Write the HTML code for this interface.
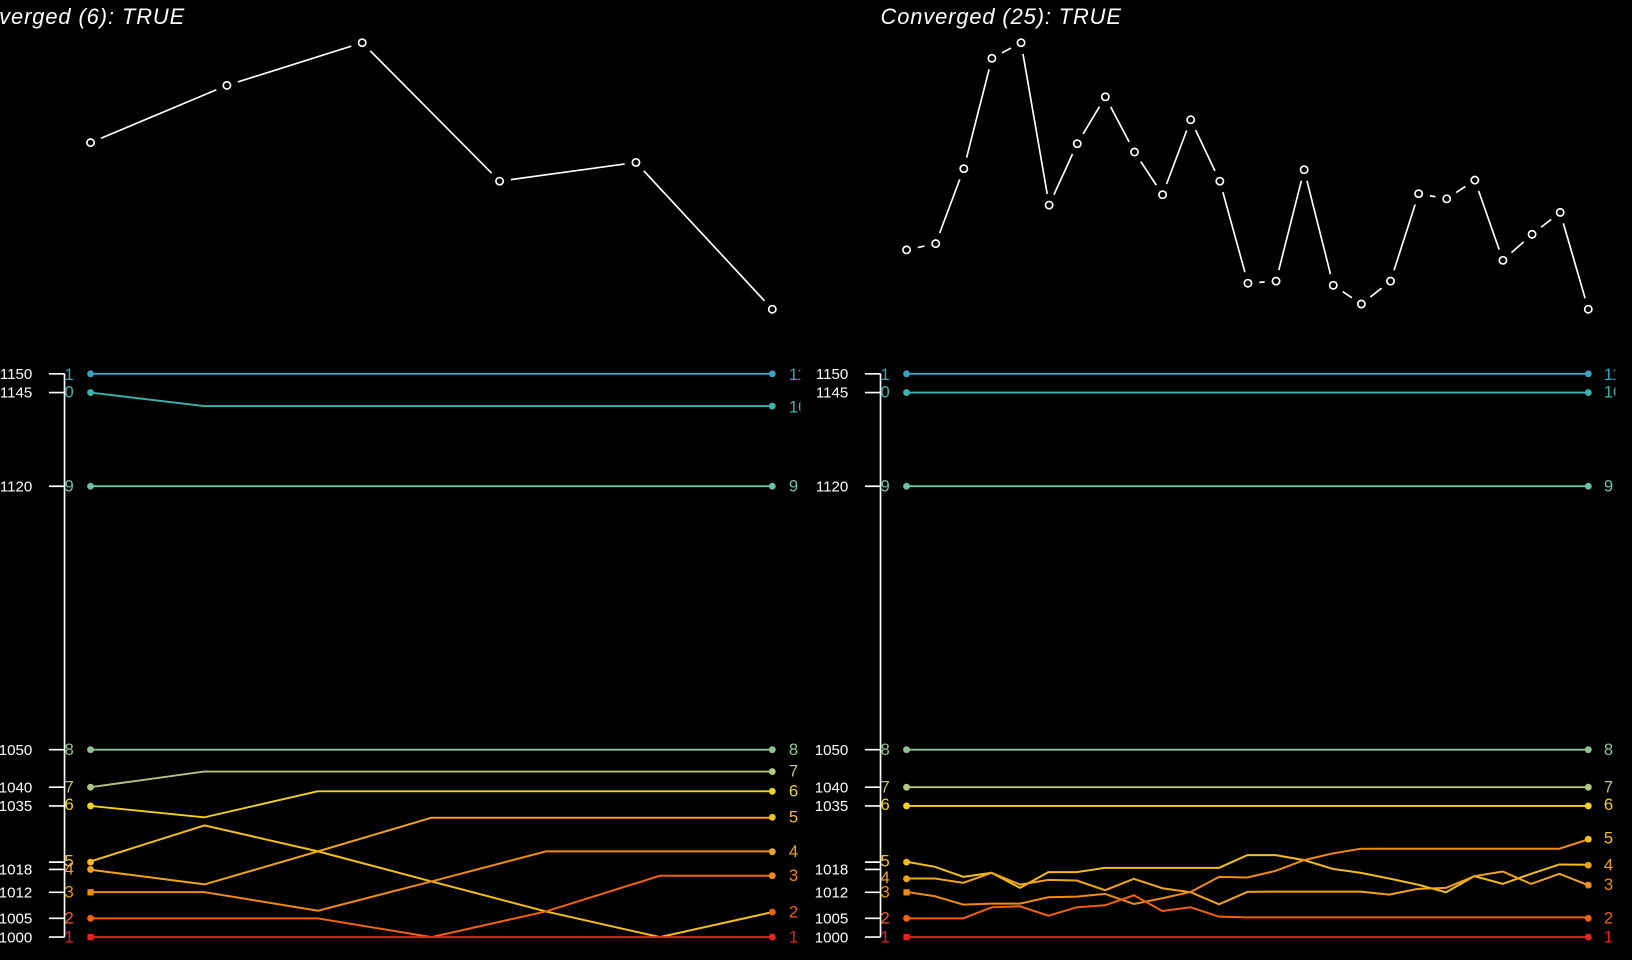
<!DOCTYPE html>
<html><head><meta charset="utf-8"><style>
html,body{margin:0;padding:0;background:#000;width:1632px;height:960px;overflow:hidden}
svg{display:block}
text{font-family:"Liberation Sans",sans-serif}
.t{fill:#fff;font-size:21px;font-style:italic}
.ax{fill:#fff;font-size:14.5px;text-anchor:end}
.lb{font-size:16px}
.w{stroke:#fff;stroke-width:1.6;fill:none}
.nl{fill:none;stroke-width:2;vector-effect:non-scaling-stroke}
</style></head><body>
<svg width="1632" height="960" viewBox="0 0 1568 922" preserveAspectRatio="none" xmlns="http://www.w3.org/2000/svg">
<rect width="1568" height="922" fill="#000"/>
<text class="t" x="177" y="23" text-anchor="end" textLength="219">Converged (6): TRUE</text>
<text class="t" x="846" y="23" textLength="231">Converged (25): TRUE</text>

<!-- top left -->
<polyline class="w" points="87,137 218,82 348,41 480,174 611,156 742,297"/>
<g fill="#000"><circle cx="87" cy="137" r="11"/><circle cx="218" cy="82" r="11"/><circle cx="348" cy="41" r="11"/><circle cx="480" cy="174" r="11"/><circle cx="611" cy="156" r="11"/><circle cx="742" cy="297" r="11"/></g>
<g fill="#000" stroke="#fff" stroke-width="1.6"><circle cx="87" cy="137" r="3.5"/><circle cx="218" cy="82" r="3.5"/><circle cx="348" cy="41" r="3.5"/><circle cx="480" cy="174" r="3.5"/><circle cx="611" cy="156" r="3.5"/><circle cx="742" cy="297" r="3.5"/></g>

<!-- top right -->
<polyline class="w" points="871,240 899,234 926,162 953,56 981,41 1008,197 1035,138 1062,93 1090,146 1117,187 1144,115 1172,174 1199,272 1226,270 1253,163 1281,274 1308,292 1336,270 1363,186 1390,191 1417,173 1444,250 1472,225 1499,204 1526,297"/>
<g fill="#000">
<circle cx="871" cy="240" r="11"/><circle cx="899" cy="234" r="11"/><circle cx="926" cy="162" r="11"/><circle cx="953" cy="56" r="11"/><circle cx="981" cy="41" r="11"/><circle cx="1008" cy="197" r="11"/><circle cx="1035" cy="138" r="11"/><circle cx="1062" cy="93" r="11"/><circle cx="1090" cy="146" r="11"/><circle cx="1117" cy="187" r="11"/><circle cx="1144" cy="115" r="11"/><circle cx="1172" cy="174" r="11"/><circle cx="1199" cy="272" r="11"/><circle cx="1226" cy="270" r="11"/><circle cx="1253" cy="163" r="11"/><circle cx="1281" cy="274" r="11"/><circle cx="1308" cy="292" r="11"/><circle cx="1336" cy="270" r="11"/><circle cx="1363" cy="186" r="11"/><circle cx="1390" cy="191" r="11"/><circle cx="1417" cy="173" r="11"/><circle cx="1444" cy="250" r="11"/><circle cx="1472" cy="225" r="11"/><circle cx="1499" cy="204" r="11"/><circle cx="1526" cy="297" r="11"/>
</g>
<g fill="#000" stroke="#fff" stroke-width="1.6">
<circle cx="871" cy="240" r="3.5"/><circle cx="899" cy="234" r="3.5"/><circle cx="926" cy="162" r="3.5"/><circle cx="953" cy="56" r="3.5"/><circle cx="981" cy="41" r="3.5"/><circle cx="1008" cy="197" r="3.5"/><circle cx="1035" cy="138" r="3.5"/><circle cx="1062" cy="93" r="3.5"/><circle cx="1090" cy="146" r="3.5"/><circle cx="1117" cy="187" r="3.5"/><circle cx="1144" cy="115" r="3.5"/><circle cx="1172" cy="174" r="3.5"/><circle cx="1199" cy="272" r="3.5"/><circle cx="1226" cy="270" r="3.5"/><circle cx="1253" cy="163" r="3.5"/><circle cx="1281" cy="274" r="3.5"/><circle cx="1308" cy="292" r="3.5"/><circle cx="1336" cy="270" r="3.5"/><circle cx="1363" cy="186" r="3.5"/><circle cx="1390" cy="191" r="3.5"/><circle cx="1417" cy="173" r="3.5"/><circle cx="1444" cy="250" r="3.5"/><circle cx="1472" cy="225" r="3.5"/><circle cx="1499" cy="204" r="3.5"/><circle cx="1526" cy="297" r="3.5"/>
</g>

<!-- axes -->
<g stroke="#fff" stroke-width="1.6" fill="none">
<path d="M62,359V900 M47,359H62 M47,377H62 M47,467H62 M47,720H62 M47,756H62 M47,774H62 M47,828H62 M47,835H62 M47,857H62 M47,882H62 M47,900H62"/>
<path d="M846,359V900 M831,359H846 M831,377H846 M831,467H846 M831,720H846 M831,756H846 M831,774H846 M831,828H846 M831,835H846 M831,857H846 M831,882H846 M831,900H846"/>
</g>
<g class="ax">
<text x="31" y="364">1150</text><text x="31" y="382">1145</text><text x="31" y="472">1120</text><text x="31" y="725">1050</text><text x="31" y="761">1040</text><text x="31" y="779">1035</text><text x="31" y="840">1018</text><text x="31" y="862">1012</text><text x="31" y="887">1005</text><text x="31" y="905">1000</text>
<text x="815" y="364">1150</text><text x="815" y="382">1145</text><text x="815" y="472">1120</text><text x="815" y="725">1050</text><text x="815" y="761">1040</text><text x="815" y="779">1035</text><text x="815" y="840">1018</text><text x="815" y="862">1012</text><text x="815" y="887">1005</text><text x="815" y="905">1000</text>
</g>

<!-- left bottom lines -->
<g stroke-width="1.8" fill="none">
<path stroke="#3aa0c4" d="M87,359H742"/>
<path stroke="#3db3ad" d="M87,377L196,390H742"/>
<path stroke="#6cc2a4" d="M87,467H742"/>
<path stroke="#8ec495" d="M87,720H742"/>
<path stroke="#b5c480" d="M87,756L196,741H742"/>
<path stroke="#f2d21e" d="M87,774L196,785L305,760H742"/>
</g>
<g transform="matrix(0.4659 0 0 0.3203 57.65 720)">
<polyline class="nl" stroke="#f3bd1e" points="63,335 298,227 532,305 766,395 1002,485 1237,562 1469,487"/>
<polyline class="nl" stroke="#f0a41c" points="63,360 298,404 532,305 766,204 1002,204 1237,204 1469,204"/>
<polyline class="nl" stroke="#ef8a12" points="63,427 298,427 532,483 766,395 1002,305 1237,305 1469,305"/>
<polyline class="nl" stroke="#f0620f" points="63,506 298,506 532,506 766,562 1002,485 1237,378 1469,378"/>
<polyline class="nl" stroke="#e8231e" points="63,562 1469,562"/>
</g>

<!-- right bottom lines -->
<g stroke-width="1.8" fill="none">
<path stroke="#3aa0c4" d="M871,359H1526"/>
<path stroke="#3db3ad" d="M871,377H1526"/>
<path stroke="#6cc2a4" d="M871,467H1526"/>
<path stroke="#8ec495" d="M871,720H1526"/>
<path stroke="#b5c480" d="M871,756H1526"/>
<path stroke="#f2d21e" d="M871,774H1526"/>
</g>
<g transform="matrix(0.4542 0 0 0.3214 855.1 806.15)">
<polyline class="nl" stroke="#f3bd1e" points="35,67 95,82 155,112 215,100 275,145 335,98 395,98 455,85 516,85 576,85 636,85 696,85 756,47 816,47 876,62 936,88 996,100 1056,117 1116,135 1176,158 1236,110 1296,133 1356,103 1416,75 1477,76"/>
<polyline class="nl" stroke="#f0a41c" points="35,117 95,117 155,130 215,100 275,135 335,121 395,123 455,152 516,118 576,146 636,158 696,194 756,157 816,156 876,156 936,156 996,156 1056,165 1116,148 1176,145 1236,110 1296,96 1356,133 1416,103 1477,137"/>
<polyline class="nl" stroke="#ef8a12" points="35,157 95,170 155,195 215,192 275,192 335,173 395,171 455,163 516,193 576,176 636,157 696,112 756,114 816,94 876,62 936,42 996,28 1056,28 1116,28 1176,28 1236,28 1296,28 1356,28 1416,28 1477,0"/>
<polyline class="nl" stroke="#f0620f" points="35,236 95,236 155,236 215,203 275,200 335,228 395,203 455,197 516,167 576,214 636,203 696,231 756,233 1477,233"/>
<polyline class="nl" stroke="#e8231e" points="35,292 1477,292"/>
</g>

<!-- dots -->
<g>
<circle cx="87" cy="359" r="3.3" fill="#3aa0c4"/><circle cx="87" cy="377" r="3.3" fill="#3db3ad"/><circle cx="87" cy="467" r="3.3" fill="#6cc2a4"/><circle cx="87" cy="720" r="3.3" fill="#8ec495"/><circle cx="87" cy="756" r="3.3" fill="#b5c480"/><circle cx="87" cy="774" r="3.3" fill="#f2d21e"/><circle cx="87" cy="828" r="3.3" fill="#f3bd1e"/><circle cx="87" cy="835" r="3.3" fill="#f0a41c"/><rect x="84" y="854" width="6" height="6" fill="#ef8a12"/><circle cx="87" cy="882" r="3.3" fill="#f0620f"/><rect x="84" y="897" width="6" height="6" fill="#e8231e"/>
<circle cx="742" cy="359" r="3.3" fill="#3aa0c4"/><circle cx="742" cy="390" r="3.3" fill="#3db3ad"/><circle cx="742" cy="467" r="3.3" fill="#6cc2a4"/><circle cx="742" cy="720" r="3.3" fill="#8ec495"/><circle cx="742" cy="741" r="3.3" fill="#b5c480"/><circle cx="742" cy="760" r="3.3" fill="#f2d21e"/><circle cx="742" cy="785" r="3.3" fill="#f3bd1e"/><circle cx="742" cy="818" r="3.3" fill="#f0a41c"/><circle cx="742" cy="841" r="3.3" fill="#ef8a12"/><circle cx="742" cy="876" r="3.3" fill="#f0620f"/><circle cx="742" cy="900" r="3.3" fill="#e8231e"/>
<circle cx="871" cy="359" r="3.3" fill="#3aa0c4"/><circle cx="871" cy="377" r="3.3" fill="#3db3ad"/><circle cx="871" cy="467" r="3.3" fill="#6cc2a4"/><circle cx="871" cy="720" r="3.3" fill="#8ec495"/><circle cx="871" cy="756" r="3.3" fill="#b5c480"/><circle cx="871" cy="774" r="3.3" fill="#f2d21e"/><circle cx="871" cy="828" r="3.3" fill="#f3bd1e"/><circle cx="871" cy="844" r="3.3" fill="#f0a41c"/><rect x="868" y="854" width="6" height="6" fill="#ef8a12"/><circle cx="871" cy="882" r="3.3" fill="#f0620f"/><rect x="868" y="897" width="6" height="6" fill="#e8231e"/>
<circle cx="1526" cy="359" r="3.3" fill="#3aa0c4"/><circle cx="1526" cy="377" r="3.3" fill="#3db3ad"/><circle cx="1526" cy="467" r="3.3" fill="#6cc2a4"/><circle cx="1526" cy="720" r="3.3" fill="#8ec495"/><circle cx="1526" cy="756" r="3.3" fill="#b5c480"/><circle cx="1526" cy="774" r="3.3" fill="#f2d21e"/><circle cx="1526" cy="806" r="3.3" fill="#f3bd1e"/><circle cx="1526" cy="831" r="3.3" fill="#f0a41c"/><circle cx="1526" cy="850" r="3.3" fill="#ef8a12"/><circle cx="1526" cy="882" r="3.3" fill="#f0620f"/><circle cx="1526" cy="900" r="3.3" fill="#e8231e"/>
</g>

<!-- labels -->
<g class="lb">
<text x="62" y="365" fill="#3aa0c4">1</text><text x="62" y="382" fill="#3db3ad">0</text><text x="62" y="472" fill="#6cc2a4">9</text><text x="62" y="725" fill="#8ec495">8</text><text x="62" y="761" fill="#b5c480">7</text><text x="62" y="778" fill="#f2d21e">6</text><text x="62" y="832" fill="#f3bd1e">5</text><text x="62" y="840" fill="#f0a41c">4</text><text x="62" y="862" fill="#ef8a12">3</text><text x="62" y="887" fill="#f0620f">2</text><text x="62" y="905" fill="#e8231e">1</text>
<text x="758" y="365" fill="#3aa0c4">11</text><text x="758" y="396" fill="#3db3ad">10</text><text x="758" y="472" fill="#6cc2a4">9</text><text x="758" y="725" fill="#8ec495">8</text><text x="758" y="746" fill="#b5c480">7</text><text x="758" y="765" fill="#f2d21e">6</text><text x="758" y="790" fill="#f3bd1e">5</text><text x="758" y="823" fill="#f0a41c">4</text><text x="758" y="846" fill="#ef8a12">3</text><text x="758" y="881" fill="#f0620f">2</text><text x="758" y="905" fill="#e8231e">1</text>
<text x="846" y="365" fill="#3aa0c4">1</text><text x="846" y="382" fill="#3db3ad">0</text><text x="846" y="472" fill="#6cc2a4">9</text><text x="846" y="725" fill="#8ec495">8</text><text x="846" y="761" fill="#b5c480">7</text><text x="846" y="778" fill="#f2d21e">6</text><text x="846" y="832" fill="#f3bd1e">5</text><text x="846" y="848" fill="#f0a41c">4</text><text x="846" y="862" fill="#ef8a12">3</text><text x="846" y="887" fill="#f0620f">2</text><text x="846" y="905" fill="#e8231e">1</text>
<text x="1541" y="365" fill="#3aa0c4">11</text><text x="1541" y="382" fill="#3db3ad">10</text><text x="1541" y="472" fill="#6cc2a4">9</text><text x="1541" y="725" fill="#8ec495">8</text><text x="1541" y="761" fill="#b5c480">7</text><text x="1541" y="778" fill="#f2d21e">6</text><text x="1541" y="810" fill="#f3bd1e">5</text><text x="1541" y="836" fill="#f0a41c">4</text><text x="1541" y="855" fill="#ef8a12">3</text><text x="1541" y="887" fill="#f0620f">2</text><text x="1541" y="905" fill="#e8231e">1</text>
</g>
<rect x="1552" y="340" width="20" height="60" fill="#000"/>
<rect x="769" y="340" width="14" height="60" fill="#000"/>
</svg>
</body></html>
